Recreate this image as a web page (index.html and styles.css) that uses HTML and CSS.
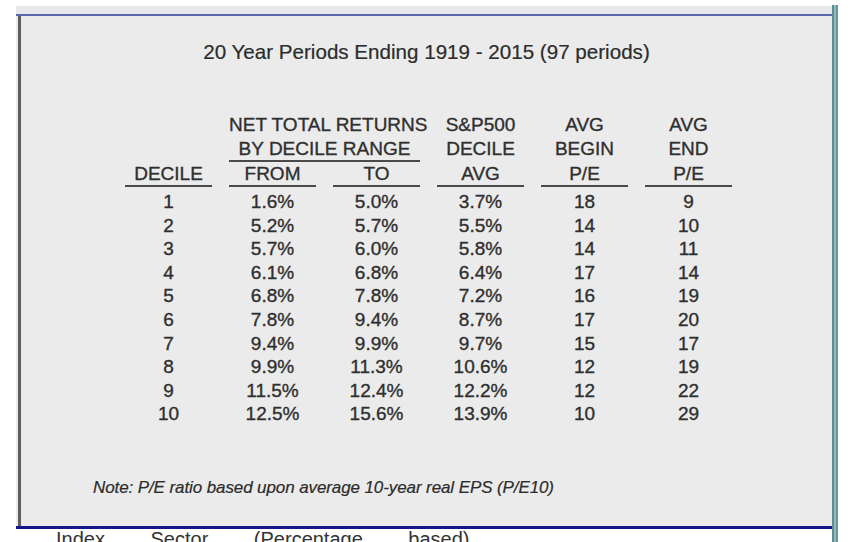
FILE: index.html
```html
<!DOCTYPE html>
<html lang="en">
<head>
<meta charset="utf-8">
<title>20 Year Periods Ending 1919 - 2015</title>
<link rel="stylesheet" href="styles.css">
</head>
<body>
<div class="screen">
  <div class="window">
    <div class="band"></div>
    <div class="content">
      <h1 class="title">20 Year Periods Ending 1919 - 2015 (97 periods)</h1>
      <div class="table">
        <div class="cell"></div>
        <div class="cell span2">NET TOTAL RETURNS</div>
        <div class="cell">S&amp;P500</div>
        <div class="cell">AVG</div>
        <div class="cell">AVG</div>

        <div class="cell"></div>
        <div class="cell span2 ul">BY DECILE RANGE</div>
        <div class="cell">DECILE</div>
        <div class="cell">BEGIN</div>
        <div class="cell">END</div>

        <div class="cell ul">DECILE</div>
        <div class="cell ul">FROM</div>
        <div class="cell ul">TO</div>
        <div class="cell ul">AVG</div>
        <div class="cell ul">P/E</div>
        <div class="cell ul">P/E</div>

        <div class="row first"><span>1</span><span>1.6%</span><span>5.0%</span><span>3.7%</span><span>18</span><span>9</span></div>
        <div class="row"><span>2</span><span>5.2%</span><span>5.7%</span><span>5.5%</span><span>14</span><span>10</span></div>
        <div class="row"><span>3</span><span>5.7%</span><span>6.0%</span><span>5.8%</span><span>14</span><span>11</span></div>
        <div class="row"><span>4</span><span>6.1%</span><span>6.8%</span><span>6.4%</span><span>17</span><span>14</span></div>
        <div class="row"><span>5</span><span>6.8%</span><span>7.8%</span><span>7.2%</span><span>16</span><span>19</span></div>
        <div class="row"><span>6</span><span>7.8%</span><span>9.4%</span><span>8.7%</span><span>17</span><span>20</span></div>
        <div class="row"><span>7</span><span>9.4%</span><span>9.9%</span><span>9.7%</span><span>15</span><span>17</span></div>
        <div class="row"><span>8</span><span>9.9%</span><span>11.3%</span><span>10.6%</span><span>12</span><span>19</span></div>
        <div class="row"><span>9</span><span>11.5%</span><span>12.4%</span><span>12.2%</span><span>12</span><span>22</span></div>
        <div class="row"><span>10</span><span>12.5%</span><span>15.6%</span><span>13.9%</span><span>10</span><span>29</span></div>
      </div>
      <p class="note">Note: P/E ratio based upon average 10-year real EPS (P/E10)</p>
    </div>
    <div class="footer-rule"></div>
    <div class="below">Index Sector (Percentage based)</div>
  </div>
  <div class="edge"></div>
</div>
</body>
</html>
```
FILE: styles.css
```css
html, body {
  margin: 0;
  padding: 0;
  height: 542px;
  overflow: hidden;
  background: #ffffff;
}

body {
  font-family: "Liberation Sans", Arial, sans-serif;
  color: #2f2f2f;
}

.screen {
  display: flex;
  padding-top: 6px;
  padding-left: 16px;
  height: 536px;
}

.window {
  width: 816px;
  background: #ebebeb;
  display: flex;
  flex-direction: column;
  overflow: hidden;
}

.window > * {
  flex-shrink: 0;
}

.band {
  height: 8px;
  background: #e8e8ec;
  border-bottom: 2px solid #5d68aa;
}

.content {
  height: 510px;
  box-sizing: border-box;
  margin-left: 2px;
  border-left: 3px solid #5e5e5e;
  background: #ebebeb;
  padding-top: 24px;
  display: flex;
  flex-direction: column;
}

.title {
  margin: 0;
  font-weight: normal;
  font-size: 20.6px;
  line-height: 24px;
  text-align: center;
  color: #2c2c2c;
  -webkit-text-stroke: 0.2px #2c2c2c;
}

.table {
  margin-top: 49px;
  margin-left: 104px;
  display: grid;
  grid-template-columns: repeat(6, 87px);
  column-gap: 17px;
  font-size: 19px;
  align-items: start;
  -webkit-text-stroke: 0.35px #2f2f2f;
}

.cell {
  text-align: center;
  line-height: 24px;
  white-space: nowrap;
}

.span2 {
  grid-column: span 2;
}

.ul {
  border-bottom: 2px solid #4a4a4a;
  line-height: 23px;
}

.row {
  display: contents;
}

.row span {
  text-align: center;
  line-height: 23.6px;
}

.row.first span {
  padding-top: 3px;
}

.note {
  margin: 51px 0 0 72px;
  font-size: 17px;
  font-style: italic;
  line-height: 22px;
  letter-spacing: -0.1px;
  color: #2c2c2c;
  -webkit-text-stroke: 0.2px #2c2c2c;
}

.footer-rule {
  height: 3px;
  background: #16168a;
}

.below {
  height: 13px;
  overflow: hidden;
  background: #ffffff;
  padding-left: 40px;
  font-size: 20px;
  line-height: 20px;
  word-spacing: 40px;
  color: #333;
}

.edge {
  width: 6px;
  background: linear-gradient(to right, #5d8d8e 0, #5d8d8e 2px, #9ab9b9 2px, #9ab9b9 4px, #6a9797 4px);
  margin-top: -1px;
}
```
